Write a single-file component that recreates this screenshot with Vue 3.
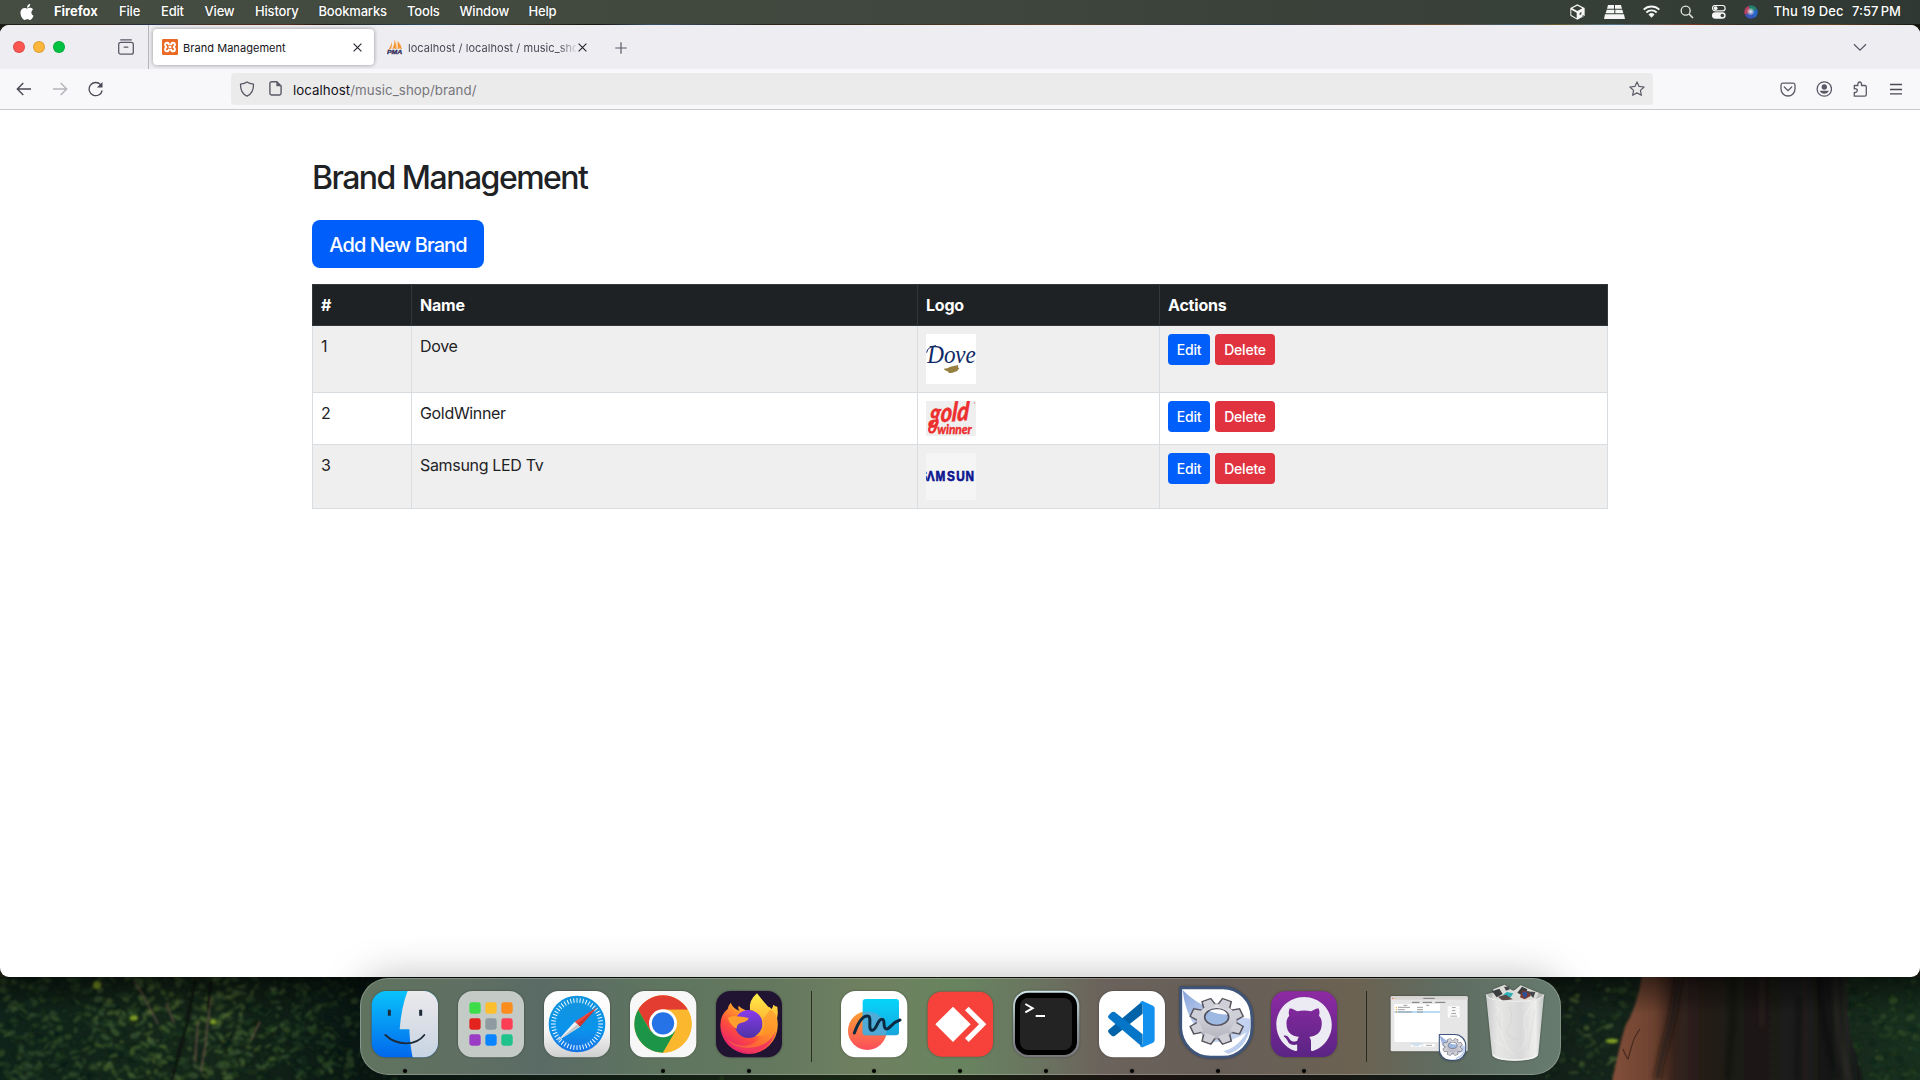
<script setup>
const menus = [
  { label: 'Firefox', w: 65, bold: true },
  { label: 'File', w: 42 },
  { label: 'Edit', w: 43.5 },
  { label: 'View', w: 50.5 },
  { label: 'History', w: 63.5 },
  { label: 'Bookmarks', w: 88.5 },
  { label: 'Tools', w: 52.5 },
  { label: 'Window', w: 69 },
  { label: 'Help', w: 60 },
]

const brands = [
  { id: 1, name: 'Dove', logo: 'dove' },
  { id: 2, name: 'GoldWinner', logo: 'gold' },
  { id: 3, name: 'Samsung LED Tv', logo: 'samsung' },
]

// Deterministic random numbers so the foliage is always the same
let seed = 7
const rnd = () => {
  seed = (seed * 16807) % 2147483647
  return seed / 2147483647
}
const greens = ['#20381a', '#2b4a20', '#17301d', '#35552a', '#0d1f14', '#0a1a10', '#1d3b22', '#3f5c2b', '#122a1a']
const leaves = []
const scatter = (n, x0, x1, palette, op) => {
  for (let i = 0; i < n; i++) {
    leaves.push({
      x: +(x0 + rnd() * (x1 - x0)).toFixed(1),
      y: +(rnd() * 103).toFixed(1),
      rx: +(1.5 + rnd() * 4).toFixed(1),
      ry: +(1 + rnd() * 2.2).toFixed(1),
      a: Math.round(rnd() * 100 - 50),
      c: palette[Math.floor(rnd() * palette.length)],
      o: op,
    })
  }
}
scatter(900, 0, 370, greens, 0.5)
scatter(170, 95, 285, ['#4f6b33', '#55702f', '#456338'], 0.55)
scatter(60, 0, 100, ['#3c5a35', '#456338'], 0.4)
scatter(90, 370, 1000, greens, 0.7)
scatter(150, 1540, 1640, greens, 0.4)
scatter(190, 1835, 1920, greens, 0.45)
scatter(14, 1565, 1618, ['#4f6b33', '#5d7a35'], 0.55)

const ticks = Array.from({ length: 48 }, (_, i) => i * 7.5)
const pads = [
  ['#3ddc4b', '#fdbf2d', '#fb8c1e'],
  ['#e3241e', '#8f9ba0', '#fb3d55'],
  ['#9a3cc4', '#0a84ff', '#1fc28a'],
]
const teeth = Array.from({ length: 8 }, (_, i) => i * 45 + 22.5)
</script>

<template>
  <div class="desktop">
    <header class="menubar">
      <svg class="apple" viewBox="0 0 24 24"><path fill="#fff" d="M12.152 6.896c-.948 0-2.415-1.078-3.96-1.04-2.04.027-3.91 1.183-4.961 3.014-2.117 3.675-.546 9.103 1.519 12.09 1.013 1.454 2.208 3.09 3.792 3.039 1.52-.065 2.09-.987 3.935-.987 1.831 0 2.35.987 3.96.948 1.637-.026 2.676-1.48 3.676-2.948 1.156-1.688 1.636-3.325 1.662-3.415-.039-.013-3.182-1.221-3.22-4.857-.026-3.04 2.48-4.494 2.597-4.559-1.429-2.09-3.623-2.324-4.39-2.376-2-.156-3.675 1.09-4.61 1.09zM15.53 3.83c.843-1.012 1.4-2.427 1.245-3.83-1.207.052-2.662.805-3.532 1.818-.78.896-1.454 2.338-1.273 3.714 1.338.104 2.715-.688 3.559-1.701" /></svg>
      <nav class="menus">
        <span v-for="m in menus" :key="m.label" :class="{ bold: m.bold }" :style="{ width: m.w + 'px' }">{{ m.label }}</span>
      </nav>
      <div class="status">
        <svg width="15" height="16" viewBox="0 0 45 48"><path fill="#f4f5f4" fill-rule="evenodd" d="M22 1 44 12v23L22 47 1 35V12zM7 13l15 8 15-8-15-8zM4 17v16l16 10V26zm30 7-5 3v7l5-3zm7 9-4 2v5l4-2z" /></svg>
        <svg class="s2" width="21" height="14" viewBox="0 0 63 42"><path fill="#f4f5f4" d="M12 0h18v11H9zM33 0h18l3 11H33zM8 14h23v11H5zM34 14h21l3 11H34zM3 28h57l3 14H0z" /></svg>
        <svg class="s3" width="17" height="13" viewBox="0 0 51 39"><g fill="none" stroke="#f4f5f4" stroke-width="5.500"><path d="M2 14a34 34 0 0 1 47 0M10 22.500a22 22 0 0 1 31 0" /></g><path fill="#f4f5f4" d="M16.500 28.500a13 13 0 0 1 18 0L25.500 38z" /></svg>
        <svg class="s4" width="14" height="14" viewBox="0 0 42 42" fill="none" stroke="#e4e6e4" stroke-width="4"><circle cx="17" cy="17" r="13.500" /><path d="m27 27 12 12" stroke-width="5" /></svg>
        <svg class="s5" width="14" height="14" viewBox="0 0 42 42"><rect x="1.500" y="1.500" width="38" height="16" rx="8" fill="none" stroke="#f4f5f4" stroke-width="3.500" /><circle cx="11" cy="9.500" r="5.500" fill="#f4f5f4" /><rect x="0" y="22" width="41" height="19" rx="9.500" fill="#f4f5f4" /><circle cx="31" cy="31.500" r="5.500" fill="#3b433c" /></svg>
        <svg class="s6" width="14" height="14" viewBox="0 0 42 42"><defs><radialGradient id="siri"><stop offset="0" stop-color="#fff" /><stop offset=".3" stop-color="#cfd8e8" stop-opacity=".8" /><stop offset="1" stop-color="#fff" stop-opacity="0" /></radialGradient></defs><circle cx="21" cy="21" r="20.500" fill="#25304a" /><path d="M21 21 3 30A20 20 0 0 1 14 2z" fill="#b5405f" /><path d="M21 21 14 2a20 20 0 0 1 25 10z" fill="#23806c" /><path d="m21 21 18-9a20 20 0 0 1-9 27z" fill="#2a68c8" /><path d="m21 21 9 18A20 20 0 0 1 3 30z" fill="#3b55b8" /><circle cx="20" cy="20" r="12" fill="url(#siri)" /></svg>
        <span class="date">Thu 19 Dec</span><span class="time">7:57&#8201;PM</span>
      </div>
    </header>

    <main class="window">
      <div class="tabs">
        <div class="lights"><i class="red"></i><i class="amber"></i><i class="green"></i></div>
        <svg class="recent" width="16" height="16" viewBox="0 0 16 16" fill="none" stroke="#5b5966" stroke-width="1.300" stroke-linecap="round"><path d="M2.700.8h10.600" /><rect x=".7" y="3.400" width="14.600" height="11.800" rx="2" /><path d="M6.200 8.200h3.600" /></svg>
        <div class="tab active">
          <svg width="16" height="16" viewBox="0 0 48 48"><rect width="48" height="48" rx="4" fill="#ea6a25" /><g fill="none" stroke="#fff" stroke-width="6" stroke-linejoin="round"><path d="M20 24h8M21 19c0-10-11-10-12-3 0 4 1 6 4 8-3 2-4 4-4 8 1 7 12 7 12-3M27 19c0-10 11-10 12-3 0 4-1 6-4 8 3 2 4 4 4 8-1 7-12 7-12-3" /></g></svg>
          <span class="t1">Brand Management</span>
          <svg class="close" width="9" height="9" viewBox="0 0 9 9"><path d="m.6.6 7.800 7.800m0-7.800L.6 8.400" stroke="#222129" stroke-width="1.100" /></svg>
        </div>
        <div class="tab second">
          <svg width="17" height="16" viewBox="0 0 51 48"><path fill="#f79838" d="M23 1q5 12 4 29-7-4-11 1Q23 16 23 1zM14 8q2 12-2 22-4-1-8 2Q12 22 14 8zM32 5q11 12 13 26-6-4-13-1z" /><path fill="#fbc07a" d="M25 4q3 13 2 26l3-1Q30 14 25 4z" /><text x="0" y="45" font-family="Liberation Sans, sans-serif" font-size="18" font-weight="bold" font-style="italic" fill="#35305a" stroke="#35305a" textLength="46" lengthAdjust="spacingAndGlyphs">PMA</text></svg>
          <span class="t2">localhost / localhost / music_shop</span>
          <svg class="close" width="9" height="9" viewBox="0 0 9 9"><path d="m.6.6 7.800 7.800m0-7.800L.6 8.400" stroke="#222129" stroke-width="1.100" /></svg>
        </div>
        <svg class="plus" width="12" height="12" viewBox="0 0 12 12"><path d="M6 .3v11.400M.3 6h11.400" stroke="#5b5966" stroke-width="1.200" /></svg>
        <svg class="chev" width="14" height="9" viewBox="0 0 14 9"><path d="m1 1.200 6 6 6-6" fill="none" stroke="#5b5966" stroke-width="1.300" /></svg>
      </div>

      <div class="toolbar">
        <svg class="back" width="16" height="14" viewBox="0 0 16 14" fill="none" stroke="#4a4854" stroke-width="1.400"><path d="M15 7H1.500M7.300 1 1.300 7l6 6" /></svg>
        <svg class="fwd" width="16" height="14" viewBox="0 0 16 14" fill="none" stroke="#b4b3ba" stroke-width="1.400"><path d="M1 7h13.500M8.700 1l6 6-6 6" /></svg>
        <svg class="reload" width="16" height="16" viewBox="0 0 16 16"><path d="M14.200 9.500A6.600 6.600 0 1 1 12.600 3.600" fill="none" stroke="#4a4854" stroke-width="1.300" /><path d="M14.500.9v5.600H8.900z" fill="#4a4854" /></svg>
        <div class="url">
          <svg width="16" height="16" viewBox="0 0 16 16" fill="none" stroke="#5b5966" stroke-width="1.300"><path d="M8 .9c2 1.500 4.200 2 6.500 2.300C14.700 9 12.500 13 8 15.200 3.500 13 1.300 9 1.500 3.200 3.800 2.900 6 2.400 8 .9z" stroke-linejoin="round" /></svg>
          <svg class="page" width="13" height="15" viewBox="0 0 13 15"><path d="M7.800.8H2.600A1.700 1.700 0 0 0 .9 2.500v9.800A1.700 1.700 0 0 0 2.600 14h7.800a1.700 1.700 0 0 0 1.700-1.700V5z" fill="none" stroke="#5b5966" stroke-width="1.400" /><path d="M7.400.7v4.600h4.700z" fill="#5b5966" /></svg>
          <p class="addr"><b>localhost</b>/music_shop/brand/</p>
          <svg class="star" width="16" height="16" viewBox="0 0 16 16" fill="none" stroke="#5b5966" stroke-width="1.200" stroke-linejoin="round"><path d="m8 .9 2.100 4.500 5 .6-3.700 3.400 1 4.900L8 11.900l-4.400 2.400 1-4.900L.9 6l5-.6z" /></svg>
        </div>
        <div class="tools">
          <svg width="16" height="16" viewBox="0 0 16 16" fill="none" stroke="#5b5966" stroke-width="1.300"><path d="M2.800 2.200h10.400A1.900 1.900 0 0 1 15 4v4a7 7 0 0 1-14 0V4a1.900 1.900 0 0 1 1.800-1.800z" /><path d="m4.300 6 3.700 3.600L11.700 6" stroke-linecap="round" /></svg>
          <svg width="16" height="16" viewBox="0 0 16 16"><circle cx="8.300" cy="8" r="7.200" fill="none" stroke="#5b5966" stroke-width="1.300" /><circle cx="8.300" cy="6" r="2.700" fill="#5b5966" /><path d="M3.700 9.800h9.200a5 5 0 0 1-9.200 0z" fill="#5b5966" /></svg>
          <svg width="16" height="16" viewBox="0 0 16 16" fill="none" stroke="#5b5966" stroke-width="1.300" stroke-linejoin="round"><path d="M2.300 15.200V11.400c4 .8 4-4.400 0-3.600V4.500h3.600c-.8-4.700 4.300-4.700 3.600 0h3.200a1.600 1.600 0 0 1 1.600 1.600v7.500a1.600 1.600 0 0 1-1.600 1.600z" /></svg>
          <svg width="16" height="16" viewBox="0 0 16 16" stroke="#4a4854" stroke-width="1.300"><path d="M2 3.500h12M2 8.500h12M2 12.800h12" /></svg>
        </div>
      </div>

      <section class="page-body">
        <h2>Brand Management</h2>
        <button class="add">Add New Brand</button>
        <table>
          <colgroup><col style="width: 99px" /><col style="width: 506px" /><col style="width: 242px" /><col /></colgroup>
          <thead>
            <tr><th>#</th><th>Name</th><th>Logo</th><th>Actions</th></tr>
          </thead>
          <tbody>
            <tr v-for="b in brands" :key="b.id">
              <td>{{ b.id }}</td>
              <td>{{ b.name }}</td>
              <td>
                <svg v-if="b.logo === 'dove'" width="50" height="50" viewBox="0 0 150 150"><rect width="150" height="150" fill="#fff" /><text x="4" y="88" font-family="Liberation Serif, serif" font-style="italic" font-size="76" fill="#0e2a66" textLength="145" lengthAdjust="spacingAndGlyphs">Dove</text><path d="M2 56Q4 38 30 35" fill="none" stroke="#0e2a66" stroke-width="3" /><path fill="#97803f" d="M53 104q12 0 20-6l24-5q-3 8 3 10-4 9-16 12-8 3-16 1l-3-4q-8-1-12-8z" /></svg>
                <svg v-else-if="b.logo === 'gold'" width="50" height="35" viewBox="0 0 150 105"><rect width="150" height="105" fill="#efefef" /><g fill="#ed2f2f" stroke="#ed2f2f" font-family="Lato, sans-serif" font-style="italic" font-weight="900"><g transform="translate(10 66) rotate(-4) skewX(-8)"><text font-size="80" stroke-width="1" textLength="118" lengthAdjust="spacingAndGlyphs">gold</text></g><path d="M22 62Q4 84 12 93 26 100 33 66" fill="none" stroke-width="7" /><text x="34" y="99" font-size="42" stroke-width="1" textLength="103" lengthAdjust="spacingAndGlyphs">winner</text></g><circle cx="145" cy="6" r="1.500" fill="none" stroke="#ed2f2f" /></svg>
                <svg v-else width="50" height="47" viewBox="0 0 150 141"><rect width="150" height="141" fill="#f5f5f5" /><g transform="translate(0 85) scale(.84 1)"><text x="-24 3 34 75 108 141" font-family="Liberation Sans, sans-serif" font-weight="bold" font-size="42" fill="#0c1490" stroke="#0c1490" stroke-width="2">SΛMSUN</text></g></svg>
              </td>
              <td>
                <div class="acts"><button class="edit">Edit</button><button class="del">Delete</button></div>
              </td>
            </tr>
          </tbody>
        </table>
      </section>
    </main>

    <footer class="shelf">
      <svg class="wall" width="1920" height="103" viewBox="0 0 1920 103">
        <defs>
          <linearGradient id="wg"><stop offset="0" stop-color="#10231a" /><stop offset=".1" stop-color="#16271a" /><stop offset=".19" stop-color="#0a1814" /><stop offset=".45" stop-color="#1d2c18" /><stop offset=".6" stop-color="#1f1613" /><stop offset=".8" stop-color="#14221b" /><stop offset=".97" stop-color="#182a1c" /><stop offset="1" stop-color="#18301f" /></linearGradient>
          <linearGradient id="trunk"><stop offset="0" stop-color="#84503a" /><stop offset=".17" stop-color="#6b412f" /><stop offset=".25" stop-color="#35221b" /><stop offset=".4" stop-color="#211b19" /><stop offset=".6" stop-color="#1c1918" /><stop offset=".78" stop-color="#201d1c" /><stop offset=".86" stop-color="#141615" /><stop offset=".94" stop-color="#222321" /><stop offset="1" stop-color="#111513" /></linearGradient>
          <linearGradient id="shade" x2="0" y2="1"><stop offset="0" stop-color="#000" stop-opacity=".5" /><stop offset=".35" stop-color="#000" stop-opacity="0" /></linearGradient>
          <filter id="soft"><feGaussianBlur stdDeviation=".8" /></filter>
          <filter id="softer"><feGaussianBlur stdDeviation="2.500" /></filter>
        </defs>
        <rect width="1920" height="103" fill="url(#wg)" />
        <g filter="url(#soft)">
          <ellipse v-for="(l, i) in leaves" :key="i" :cx="l.x" :cy="l.y" :rx="l.rx" :ry="l.ry" :fill="l.c" :opacity="l.o" :transform="`rotate(${l.a} ${l.x} ${l.y})`" />
          <g fill="none" stroke="#7a5f50" stroke-width="1.300" opacity=".8"><path d="M134 3l10 17 14 27M166 26l8 20M195 10l-5 20M260 45l-9 18M198 45l-3 40M211 20l-6 50-4 25" /></g>
          <path d="M196 0l-10 50-14 53M211 2l-3 30" fill="none" stroke="#0c120f" stroke-width="3" />
          <g fill="#7c9a22"><ellipse cx="97" cy="8" rx="4" ry="4" /><ellipse cx="134" cy="41" rx="4" ry="2.500" /><ellipse cx="213" cy="45" rx="3" ry="2.500" /><ellipse cx="1612" cy="64" rx="6" ry="2.500" /></g>
          <path fill="url(#trunk)" d="M1642-2q-4 30-17 52-6 20-13 55h250q-2-20-10-40-6-30-5-67z" />
        </g>
        <g filter="url(#softer)" fill="none">
          <path d="M1679 0q-6 40-12 60-6 20-10 43" stroke="#15100e" stroke-width="7" opacity=".6" />
          <path d="M1733 0v45l-6 58M1818 0q4 50 20 103M1799 20l-2 83" stroke="#0d0d0d" stroke-width="5" opacity=".35" />
          <path d="M1834 0q2 60 16 103M1762 0v50" stroke="#4a3a30" stroke-width="3" opacity=".35" />
        </g>
        <path d="M1640 52q-6 8-8 16l-4 14q-2-2-5-10" fill="none" stroke="#2a1611" stroke-width="1.200" opacity=".6" />
        <rect width="1920" height="103" fill="url(#shade)" />
      </svg>

      <div class="dock">
        <!-- Finder -->
        <svg class="app" viewBox="36 54 258 291"><defs><linearGradient id="f1" x2="0" y2="1"><stop stop-color="#0ac4fb" /><stop offset="1" stop-color="#0164ec" /></linearGradient><linearGradient id="f2" x2="0" y2="1"><stop stop-color="#eceaec" /><stop offset="1" stop-color="#c6d3e2" /></linearGradient><clipPath id="fc"><rect x="65" y="93" width="199" height="199" rx="44" /></clipPath></defs><g clip-path="url(#fc)"><path d="M60 90h210v210H60z" fill="url(#f1)" /><path d="M174 90q-20 50-25 118h29q2 50 11 90h81V90z" fill="url(#f2)" /></g><g fill="none" stroke="#1d2a38" stroke-linecap="round"><path d="M118 149v18M212 149v18" stroke-width="9" stroke-linecap="butt" /><path d="M106 225q26 25 62 25t55-25" stroke-width="5.500" /></g><circle class="dot" cx="165" cy="333" r="6" /></svg>
        <!-- Launchpad -->
        <svg class="app" viewBox="294 54 258 291"><rect x="324" y="93" width="198" height="199" rx="44" fill="#c4cbc6" /><g v-for="(row, r) in pads" :key="r"><rect v-for="(c, k) in row" :key="k" :x="358 + k * 48" :y="127 + r * 48" width="34" height="34" rx="7" :fill="c" /></g></svg>
        <!-- Safari -->
        <svg class="app" viewBox="552 54 258 291"><defs><linearGradient id="s1" x2="0" y2="1"><stop stop-color="#fff" /><stop offset=".6" stop-color="#f6f6f6" /><stop offset="1" stop-color="#cfcfcf" /></linearGradient><linearGradient id="s2" x2="0" y2="1"><stop stop-color="#1294dc" /><stop offset=".6" stop-color="#0a94ec" /><stop offset="1" stop-color="#1772e4" /></linearGradient></defs><rect x="582" y="93" width="198" height="199" rx="44" fill="url(#s1)" /><circle cx="681" cy="192" r="85" fill="url(#s2)" /><g stroke="#e9f6ff" stroke-width="3"><path v-for="t in ticks" :key="t" d="M681 114v14" :transform="`rotate(${t} 681 192)`" /></g><path d="M741 142 674 185l16 15z" fill="#ec4a42" /><path d="m741 142-51 58-8-8z" fill="#c9352f" /><path d="m622 243 52-58 16 15z" fill="#f2f2f2" /><path d="m622 243 60-50 8 7z" fill="#c4c9cd" /></svg>
        <!-- Chrome -->
        <svg class="app" viewBox="810 54 258 291"><rect x="840" y="93" width="199" height="199" rx="44" fill="#f7f7f7" /><circle cx="939" cy="192" r="86" fill="#fbb82e" /><path d="M864.500 149A86 86 0 0 1 1013.500 149L939 149 901.800 213.500z" fill="#e33c31" /><path d="M864.500 149A86 86 0 0 0 939 278L976.200 213.500 901.800 213.500z" fill="#1d9549" /><path d="M939 149h74.500A86 86 0 0 1 939 278l37.200-64.500z" fill="#fbb82e" /><circle cx="939" cy="190" r="42" fill="#fff" /><circle cx="939" cy="190" r="33.500" fill="#2673e8" /><circle class="dot" cx="939" cy="333" r="6" /></svg>
        <!-- Firefox -->
        <svg class="app" viewBox="1068 54 258 291"><defs><linearGradient id="x1" x1=".9" y1=".1" x2=".25" y2="1"><stop stop-color="#ffe03e" /><stop offset=".35" stop-color="#ff9a2a" /><stop offset=".65" stop-color="#ff4a40" /><stop offset="1" stop-color="#e01d72" /></linearGradient><linearGradient id="x2" x2="0" y2="1"><stop stop-color="#8a3bea" /><stop offset="1" stop-color="#4d33a6" /></linearGradient><linearGradient id="x3" x2="0" y2="1"><stop stop-color="#fff04a" /><stop offset="1" stop-color="#ff9326" /></linearGradient></defs><rect x="1098" y="93" width="198" height="199" rx="44" fill="#211433" /><path d="M1142 128q8 18 26 24-6-8-2-15 12 14 40 18l52-14q26 18 25 55a86 86 0 0 1-172 0q0-32 22-49 2-10 9-19z" fill="url(#x1)" /><circle cx="1196" cy="192" r="42" fill="url(#x2)" /><path d="M1221 100q-26 22-21 50 24 4 34 24 12 34-18 54 40 2 52-22 20-30 14-66-6 0-12-6-2 12-8 14-18-18-41-48z" fill="url(#x3)" /><path d="M1283 192q0 60-60 82-60 10-92-36 48 38 94 2 26-24 14-62l22-30q20 12 22 44z" fill="#ff8a2a" opacity=".5" /><path d="M1133 174q14-8 28-5 22 2 35 5-3 11-22 14-14 3-14 18-18-8-27-32z" fill="#ff9f2d" /><path d="M1114 204q10 56 80 60 60-2 84-50-20 64-82 64-74-2-82-74z" fill="#ee2a68" opacity=".75" /><circle class="dot" cx="1197" cy="333" r="6" /></svg>
        <span class="sep"></span>
        <!-- Freeform -->
        <svg class="app" viewBox="93 54 258 291"><defs><linearGradient id="r1" x2="0" y2="1"><stop stop-color="#ffa033" /><stop offset="1" stop-color="#fb4d5c" /></linearGradient><linearGradient id="r2" x2="0" y2="1"><stop stop-color="#05d5fb" /><stop offset="1" stop-color="#19a5db" /></linearGradient></defs><rect x="123" y="93" width="199" height="199" rx="44" fill="#fff" /><circle cx="202" cy="212" r="58" fill="url(#r1)" /><rect x="188" y="117" width="109" height="109" rx="9" fill="url(#r2)" /><path d="M188 156a58 58 0 0 1 70 70h-61q-9 0-9-9z" fill="#5aa9d4" opacity=".85" /><path d="M163 219q18-50 38-51c18-2 0 41 15 43 14 1 16-34 30-33 12 0 0 28 14 29 10 0 16-20 40-27" fill="none" stroke="#0b2b43" stroke-width="9" stroke-linecap="round" /><circle class="dot" cx="222" cy="333" r="6" /></svg>
        <!-- AnyDesk -->
        <svg class="app" viewBox="351 54 258 291"><rect x="383" y="95" width="196" height="195" rx="42" fill="#f6423b" /><path d="m406 193 53-53 53 53-53 53zM495 151l11-11 53 53-53 53-11-11 42-42z" fill="#fff" /><circle class="dot" cx="480" cy="333" r="6" /></svg>
        <!-- Terminal -->
        <svg class="app" viewBox="609 54 258 291"><defs><linearGradient id="t1" x2="0" y2="1"><stop stop-color="#cfe6ea" /><stop offset=".5" stop-color="#8d9a9f" /><stop offset="1" stop-color="#77757a" /></linearGradient></defs><rect x="639" y="92" width="199" height="200" rx="46" fill="url(#t1)" /><rect x="645" y="98" width="186" height="187" rx="40" fill="#000" /><rect x="660" y="114" width="156" height="156" rx="24" fill="#232323" /><path d="m676 132 22 12.500-22 12.500" fill="none" stroke="#fff" stroke-width="6" /><path d="M707 168h28" stroke="#fff" stroke-width="6" /><circle class="dot" cx="738" cy="333" r="6" /></svg>
        <!-- VS Code -->
        <svg class="app" viewBox="867 54 258 291"><rect x="897" y="93" width="198" height="199" rx="44" fill="#fff" /><path d="m1028 123-102 86q-4 5 0 9l9 9q5 4 10 0l83-66z" fill="#0062a8" /><path d="m1028 262-102-87q-4-5 0-9l9-9q5-4 10 0l83 66z" fill="#0575c7" /><path d="m1028 123 31 14q5 3 5 8v95q0 5-5 8l-31 14q-8 0-8-7 6 2 9-4V137q-3-7-9-6 0-7 8-8z" fill="#1292ee" /><circle class="dot" cx="996" cy="333" r="6" /></svg>
        <!-- Services -->
        <svg class="app" viewBox="45 54 258 291">
          <defs>
            <linearGradient id="g1" x2="0" y2="1"><stop stop-color="#e0e0e6" /><stop offset="1" stop-color="#b4b4c0" /></linearGradient>
            <linearGradient id="g2" x2="1" y2="1"><stop stop-color="#86a3da" /><stop offset=".5" stop-color="#cfdcf4" /><stop offset="1" stop-color="#b4c8ea" /></linearGradient>
            <g id="cog">
              <path d="M62 83H188a88 88 0 0 1 88 88v33a88 88 0 0 1-88 88h-36a90 90 0 0 1-90-90z" fill="#fff" stroke="#3e5478" stroke-width="9" stroke-linejoin="round" />
              <path d="M68 90q70 72 203 86v28q-14 62-66 78Q80 220 68 90z" fill="url(#g2)" />
              <path d="M68 210q24 64 100 66 60-2 92-60-40 30-92 30T68 172z" fill="#fff" />
              <g transform="translate(170 184) scale(1 .86)"><g fill="url(#g1)" stroke="#5a5660" stroke-width="5"><path v-for="t in teeth" :key="t" d="M-19-55-14-80H14L19-55z" :transform="`rotate(${t})`" /></g><circle r="61" fill="url(#g1)" stroke="#77737f" stroke-width="2" /><g fill="#cfcfd7"><path v-for="t in teeth" :key="t" d="M-16-50-12-77H12L16-50z" :transform="`rotate(${t})`" /></g><ellipse cy="-15" rx="36" ry="29" fill="#9db9e2" stroke="#55525e" stroke-width="5" /><path d="M-22-36Q10-22 33-24 24-42 0-42-14-42-22-36z" fill="#fff" /></g>
            </g>
          </defs>
          <use href="#cog" /><circle class="dot" cx="174" cy="333" r="6" />
        </svg>
        <!-- GitHub Desktop -->
        <svg class="app" viewBox="303 54 258 291"><defs><linearGradient id="h1" x2="0" y2="1"><stop stop-color="#8e2aa3" /><stop offset="1" stop-color="#5a2484" /></linearGradient></defs><rect x="333" y="94" width="198" height="197" rx="44" fill="url(#h1)" /><path transform="translate(349 111) scale(10.400)" fill="#ecebf3" d="M8 0C3.580 0 0 3.580 0 8c0 3.540 2.290 6.530 5.470 7.590.4.070.55-.17.55-.38 0-.19-.010-.82-.010-1.490-2.010.37-2.530-.49-2.690-.94-.090-.23-.48-.94-.82-1.130-.28-.15-.68-.52-.010-.53.63-.010 1.080.58 1.230.82.72 1.210 1.870.87 2.330.66.070-.52.28-.87.51-1.070-1.780-.2-3.640-.89-3.640-3.950 0-.87.31-1.590.82-2.150-.080-.2-.36-1.020.080-2.120 0 0 .67-.21 2.200.82.64-.18 1.320-.27 2-.27.68 0 1.360.090 2 .27 1.530-1.040 2.200-.82 2.200-.82.44 1.100.16 1.920.080 2.120.51.56.82 1.270.82 2.150 0 3.070-1.870 3.750-3.650 3.950.29.25.54.73.54 1.480 0 1.070-.010 1.930-.010 2.200 0 .21.15.46.55.38A8.013 8.013 0 0 0 16 8c0-4.420-3.580-8-8-8z" /><circle class="dot" cx="432" cy="333" r="6" /></svg>
        <span class="sep"></span>
        <!-- Minimised window -->
        <svg class="app" viewBox="678 54 258 291"><rect x="692" y="109" width="231" height="165" rx="4" fill="#e6e6e6" /><path d="M692 119v-6q0-4 4-4h223q4 0 4 4v6z" fill="#d9d7d6" /><circle cx="698" cy="115" r="2" fill="#f5605c" /><circle cx="704" cy="115" r="2" fill="#f6be4f" /><circle cx="710" cy="115" r="2" fill="#e0c9b0" /><path d="M790 115h34M756 127h22M788 127h28M826 127h30" stroke="#777" stroke-width="3" /><rect x="703" y="132" width="137" height="114" fill="#fff" /><rect x="703" y="153" width="137" height="6" fill="#b9dcf4" /><g stroke="#8b8b8b" stroke-width="2.500"><path d="M730 136h12M798 136h10M714 142h36M771 142h18M714 149h20M771 149h18M714 156h42M771 156h18" /></g><g fill="#f0a030"><circle cx="709" cy="142" r="2" /><circle cx="709" cy="149" r="2" /><circle cx="709" cy="156" r="2" /></g><g fill="#fff"><rect x="863" y="139" width="36" height="7" /><rect x="863" y="148" width="36" height="7" /><rect x="863" y="157" width="36" height="7" /><rect x="863" y="165" width="36" height="7" /><rect x="752" y="252" width="34" height="8" /><rect x="790" y="252" width="34" height="8" /></g><g stroke="#999" stroke-width="2.500"><path d="M876 142.500h11M876 151.500h10M874 160.500h14M871 168.500h20M798 256h18" /><path d="M760 256h18M752 252h34" stroke="#a9cbe6" /></g><use href="#cog" transform="translate(815 193) scale(.37)" /></svg>
        <!-- Trash -->
        <svg class="app" viewBox="936 54 258 291"><defs><linearGradient id="b1"><stop stop-color="#c9cbca" /><stop offset=".2" stop-color="#e6e6e5" /><stop offset=".6" stop-color="#d8d9d8" /><stop offset=".85" stop-color="#eeeeed" /><stop offset="1" stop-color="#bfc3c1" /></linearGradient></defs><path d="M978 103q86-24 174 0l-2 14q-80 18-170 0z" fill="#b9bcba" /><g><path d="m1000 88 34-14 26 20 22-18 34 14 20 8-10 22-60 8-70-8z" fill="#dcdcd8" /><path d="m996 94 22-8 10 16-18 10zM1072 98l14-18 16 8-8 22z" fill="#3b3d3f" /><path d="m1040 96 20 4-8 12-26-4z" fill="#2fb0b4" /><path d="m1086 92 20 2 6 14-18 10-14-6z" fill="#7b3b33" /><path d="m1100 94 26 2-6 18zM1032 80l14 0 4 8-12 4z" fill="#48474d" /><path d="m1086 98 14-4 2 14-10 6z" fill="#2c4f98" /><path d="m1014 110 24-6 20 14-30 4z" fill="#5a4b48" /></g><path d="M978 104q6 20 87 20t87-20l-17 178q-4 20-70 20t-69-20z" fill="url(#b1)" /><g fill="none" stroke="#fff" stroke-width="3" opacity=".3"><path d="M1006 140q30 16 20 50t22 80M1110 140q-26 40-14 70t-20 64M1000 240q40 20 56 40" /></g><g fill="none" stroke="#b3b6b5" stroke-width="2" opacity=".3"><path d="M1046 140q20 30 0 60t30 40M1124 150q-10 60-20 120M1010 170l16 40" /></g><path d="M978 104q6 20 87 20t87-20" fill="none" stroke="#f0f0f0" stroke-width="3" /><path d="M998 284q14 16 67 16t68-16" fill="none" stroke="#f4f4f4" stroke-width="4" /></svg>
      </div>
    </footer>
  </div>
</template>

<style>
html, body { margin: 0; background: #10160f; }
</style>

<style scoped>
.desktop {
  width: 1920px; height: 1080px; overflow: hidden; display: flex; flex-direction: column;
  font-family: Inter, "Liberation Sans", sans-serif; color: #1e2225;
  background: linear-gradient(90deg, #1a1c14, #3a2a1a 5%, #24304a 8%, #4a2c18 11%, #5a2a1c 15%, #1c1812 17%, #2c4a60 22%, #3a3220 27%, #16140f 31%, #3a5068 34%, #2a2418 40%, #58422a 55%, #2a3a4a 65%, #6a4a2c 75%, #3c5a70 79%, #6a5a2c 81%, #4a7088 84%, #7a3a20 88%, #2a2a20 91%, #6a4422 95%, #12160f);
}
.desktop svg { display: block; flex: none; }
.menubar {
  height: 24px; flex: none; display: flex; align-items: center; color: #fff; font-size: 13px; font-weight: 500;
  background: linear-gradient(90deg, #454c41, #41493f 40%, #363f38 80%, #303833);
  box-sizing: border-box; padding: 0 18.500px 1px 19px; text-shadow: 0 0 2px rgba(0, 0, 0, .3);
}
.apple { width: 16px; height: 16px; }
.menus { display: flex; margin-left: 19px; line-height: 22px; margin-top: -1px; white-space: nowrap; letter-spacing: -.18px; }
.menus span { flex: none; }
.menus .bold { font-weight: 700; letter-spacing: -.05px; }
.status { margin-left: auto; display: flex; align-items: center; line-height: 22px; white-space: nowrap; }
.status span { margin-top: -1px; }
.s2 { margin-left: 19px; }
.s3 { margin-left: 18px; }
.s4 { margin-left: 20px; }
.s5 { margin-left: 18px; }
.s6 { margin-left: 18px; }
.date { margin-left: 16px; width: 78.500px; letter-spacing: .1px; }
.time { width: 49.500px; }

.window { height: 952px; flex: none; margin-top: 1px; background: #fff; border-radius: 9px; overflow: hidden; display: flex; flex-direction: column; }
.tabs { height: 44px; flex: none; display: flex; align-items: center; background: #eeedf2; }
.lights { display: flex; gap: 8px; margin-left: 13px; width: 105px; }
.lights i { width: 12px; height: 12px; border-radius: 50%; flex: none; box-sizing: border-box; border: .5px solid rgba(0, 0, 0, .12); }
.red { background: #fc5651; }
.amber { background: #fdb63c; }
.green { background: #02c241; }
.recent { padding-right: 15px; box-sizing: content-box; }
.tab { display: flex; align-items: center; box-sizing: border-box; height: 36px; border-radius: 4px; font-size: 11px; }
.active { width: 221px; padding: 0 12px 0 9px; background: #fff; color: #15141a; box-shadow: 0 0 4px rgba(0, 0, 0, .38); position: relative; margin-left: 4px; }
.recent + .tab::before { content: ""; position: absolute; left: -5px; top: -4px; width: 1px; height: 44px; background: #b5b4ba; }
.close { margin-left: auto; }
.t1 { margin: 1.500px 0 0 5px; letter-spacing: .05px; }
.second { width: 222px; padding: 0 9px 0 13px; color: #4a4854; }
.t2 { margin: 1.500px 0 0 4px; width: 168px; overflow: hidden; white-space: nowrap; letter-spacing: .05px; -webkit-mask-image: linear-gradient(90deg, #000 150px, transparent 171px); mask-image: linear-gradient(90deg, #000 150px, transparent 171px); }
.plus { margin-left: 19px; margin-top: 1px; }
.chev { margin-left: auto; margin-right: 53px; }

.toolbar { height: 41px; flex: none; box-sizing: border-box; padding-bottom: 1px; border-bottom: 1px solid #c9c9ca; display: flex; align-items: center; background: #f8f8fb; }
.back { margin-left: 16px; }
.fwd { margin-left: 20px; }
.reload { margin-left: 20px; }
.url { box-sizing: border-box; width: 1422px; height: 32px; margin-left: 127px; padding: 0 8px; border-radius: 4px; background: #ebebec; display: flex; align-items: center; }
.page { margin-left: 13.500px; }
.addr { margin: 2px 0 0 11.500px; font-size: 13.300px; letter-spacing: .05px; color: #77767c; }
.addr b { font-weight: 400; color: #15141a; }
.star { margin-left: auto; }
.tools { margin-left: auto; margin-right: 16px; display: flex; gap: 20px; }

.page-body { width: 1296px; margin: 0 auto; display: flex; flex-direction: column; align-items: flex-start; padding-top: 49px; }
h2 { margin: 0; font-size: 32px; line-height: 38px; font-weight: 500; white-space: nowrap; letter-spacing: -1.520px; }
button { font-family: inherit; color: #fff; border: 0; padding: 0; white-space: nowrap; }
.add { width: 172px; height: 48px; margin-top: 23px; margin-bottom: 16px; padding-top: 2px; border-radius: 8px; background: #005efb; font-size: 20px; font-weight: 500; letter-spacing: -.9px; }
table { width: 1296px; border-collapse: collapse; table-layout: fixed; font-size: 16px; line-height: 24px; letter-spacing: -.33px; }
th, td { padding: 8px; text-align: left; vertical-align: top; border: 1px solid #d8dde1; }
th { background: #1e2225; color: #fff; border-color: #32373b; font-weight: 700; letter-spacing: -.2px; }
tbody tr:nth-child(odd) { background: #efefef; }
.acts { display: flex; gap: 5px; }
.acts button { height: 31px; border-radius: 4px; font-size: 14px; font-weight: 500; letter-spacing: -.2px; }
.acts .edit { width: 42px; background: #005efb; }
.acts .del { width: 60px; background: #e0333f; }

.shelf { height: 103px; flex: none; position: relative; display: flex; justify-content: center; align-items: flex-start; }
.wall { position: absolute; left: 0; top: 0; }
.dock {
  position: relative; box-sizing: border-box; width: 1201px; height: 97px; margin: 1px 0 0 1px; border-radius: 28px; display: flex;
  border: 1px solid rgba(255, 255, 255, .22); padding: 0 1px;
  background: linear-gradient(90deg, #60735f, #5f6f62 9%, #5a6b66 15%, #60755f 25%, #64785f 34%, #6f8060 42%, #68845f 50%, #6a7560 56%, #6b625b 62%, #675e58 72%, #6b6252 83%, #5f6c60 90%, #667b6e);
  box-shadow: 0 0 42px rgba(0, 0, 0, .27);
}
.app { width: 86px; height: 97px; margin-top: -1px; filter: drop-shadow(0 .5px 1px rgba(0, 0, 0, .35)); }
.dot { fill: #000; }
.sep { width: 39px; flex: none; height: 71px; margin-top: 12px; background: linear-gradient(90deg, transparent 19px, rgba(20, 25, 15, .75) 19px, rgba(20, 25, 15, .75) 20px, transparent 20px); }
</style>
